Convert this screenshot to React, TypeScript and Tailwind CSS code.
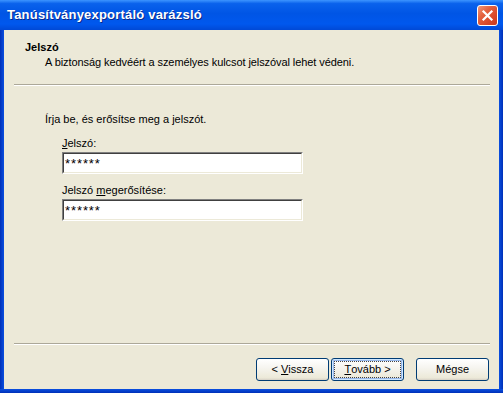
const font = { fontFamily: '"Liberation Sans", "DejaVu Sans", sans-serif' };

function CloseButton() {
  return (
    <div className="w-[21px] h-[21px] rounded-[3px] border border-white bg-[linear-gradient(135deg,#f0987a_0%,#e4623f_35%,#d8482a_70%,#c8391d_100%)] flex items-center justify-center">
      <svg width="13" height="13" viewBox="0 0 13 13">
        <path d="M2.5 2.5 L10.5 10.5 M10.5 2.5 L2.5 10.5" stroke="#ffffff" strokeWidth="2.2" strokeLinecap="square" />
      </svg>
    </div>
  );
}

function Separator() {
  return (
    <div className="ml-[10px] mr-[9px]">
      <div className="h-px bg-[#aca899]" />
      <div className="h-px bg-white" />
    </div>
  );
}

function XpInput() {
  return (
    <div className="w-[241px] h-[22px] border border-t-[#808080] border-l-[#808080] border-r-white border-b-white">
      <div className="h-full border border-t-[#404040] border-l-[#404040] border-r-[#ece9d8] border-b-[#ece9d8] bg-white pl-[1px] pt-[3px] flex items-start text-[13px] leading-none tracking-[0.9px] text-black">
        ******
      </div>
    </div>
  );
}

function XpButton({ children, primary }: { children: React.ReactNode; primary?: boolean }) {
  return (
    <button
      className={`w-[73px] h-[23px] rounded-[3px] border border-[#003c74] bg-[linear-gradient(to_bottom,#ffffff_0%,#f6f5f0_40%,#ece9d8_90%,#d6d0c5_100%)] text-[11px] text-black flex items-stretch p-[2px] ${
        primary ? "shadow-[inset_0_0_0_1px_#cee7ff,inset_0_0_0_2px_#98b8ea]" : ""
      }`}
    >
      <span
        className={`flex-1 flex items-center justify-center leading-[13px] border border-dotted ${
          primary ? "border-[#444]" : "border-transparent"
        }`}
      >
        {children}
      </span>
    </button>
  );
}

export default function App() {
  return (
    <div className="w-[503px] h-[393px] flex flex-col bg-[#ece9d8] overflow-hidden" style={font}>
      {/* title bar */}
      <div className="h-[30px] shrink-0 flex items-center justify-between pl-[7px] pr-[5px] bg-[linear-gradient(to_bottom,#3d95ff_0%,#0a62ec_12%,#0055e5_45%,#0058ee_80%,#0049d6_100%)]">
        <span className="text-white font-bold text-[13px] [text-shadow:1px_1px_0_#0a2a8a] tracking-[0.2px]">
          Tanúsítványexportáló varázsló
        </span>
        <CloseButton />
      </div>

      <div className="flex-1 flex min-h-0">
        <div className="w-[4px] bg-[linear-gradient(to_right,#0030b8,#0a4fe0)]" />

        <div className="flex-1 flex flex-col text-[11px] text-black">
          {/* header */}
          <div className="pt-[11px] pl-[21px] h-[54px]">
            <div className="font-bold leading-[13px]">Jelszó</div>
            <div className="pl-[20px] mt-[2px] leading-[13px] tracking-[-0.08px]">
              A biztonság kedvéért a személyes kulcsot jelszóval lehet védeni.
            </div>
          </div>
          <Separator />

          {/* body */}
          <div className="pl-[41px] pt-[27px]">
            <div className="leading-[13px]">Írja be, és erősítse meg a jelszót.</div>
            <div className="pl-[17px] mt-[11px]">
              <div className="leading-[13px]">
                <span className="underline">J</span>elszó:
              </div>
              <div className="mt-[2px]">
                <XpInput />
              </div>
              <div className="leading-[13px] mt-[10px]">
                Jelszó <span className="underline">m</span>egerősítése:
              </div>
              <div className="mt-[2px]">
                <XpInput />
              </div>
            </div>
          </div>

          <div className="mt-auto">
            <Separator />
          </div>
          <div className="flex justify-end pr-[10px] mt-[13px] mb-[8px]">
            <XpButton>
              &lt; <span className="underline ml-[3px]">V</span>issza
            </XpButton>
            <div className="ml-[2px]">
              <XpButton primary>
                <span className="underline">T</span>ovább &gt;
              </XpButton>
            </div>
            <div className="ml-[12px]">
              <XpButton>Mégse</XpButton>
            </div>
          </div>
        </div>

        <div className="w-[4px] bg-[linear-gradient(to_left,#0030b8,#0a4fe0)]" />
      </div>
      <div className="h-[4px] shrink-0 bg-[linear-gradient(to_top,#0030b8,#0a4fe0)]" />
    </div>
  );
}
